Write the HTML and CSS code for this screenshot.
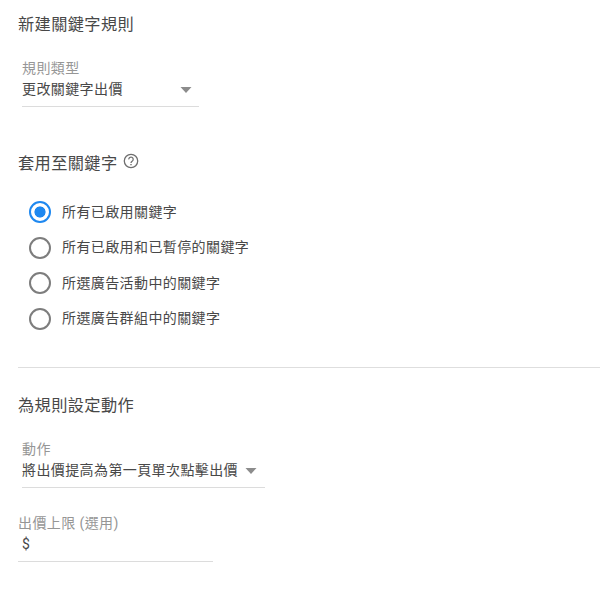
FILE: index.html
```html
<!DOCTYPE html>
<html lang="zh-TW">
<head>
    <meta charset="UTF-8">
    <meta name="viewport" content="width=device-width, initial-scale=1.0">
    <title>新建關鍵字規則</title>
    <link rel="stylesheet" href="styles.css">
</head>
<body>
    <div class="section type-section">
        <h2 class="title">新建關鍵字規則</h2>
        <div class="field select-type">
            <div class="label">規則類型</div>
            <div class="value">
                <span>更改關鍵字出價</span>
                <svg class="arrow" width="12" height="6" viewBox="0 0 12 6"><path d="M0.5 0h11L6 6z" fill="#8c8c8c"/></svg>
            </div>
        </div>
    </div>

    <div class="section apply-section">
        <h2 class="title">
            套用至關鍵字
            <svg class="help" width="16" height="16" viewBox="0 0 16 16" fill="none" stroke="#6e6e6e">
                <circle cx="8" cy="8" r="6.7" stroke-width="1.3"/>
                <path d="M5.8 6.4a2.2 2.2 0 1 1 3.7 1.5C8.7 8.6 8 8.9 8 10" stroke-width="1.25"/>
                <path d="M8 10.9v1.4" stroke-width="1.4"/>
            </svg>
        </h2>
        <div class="radio-group">
            <label class="option"><input type="radio" name="scope" checked><span>所有已啟用關鍵字</span></label>
            <label class="option"><input type="radio" name="scope"><span>所有已啟用和已暫停的關鍵字</span></label>
            <label class="option"><input type="radio" name="scope"><span>所選廣告活動中的關鍵字</span></label>
            <label class="option"><input type="radio" name="scope"><span>所選廣告群組中的關鍵字</span></label>
        </div>
    </div>

    <div class="section action-section">
        <h2 class="title">為規則設定動作</h2>
        <div class="field select-action">
            <div class="label">動作</div>
            <div class="value">
                <span>將出價提高為第一頁單次點擊出價</span>
                <svg class="arrow" width="12" height="6" viewBox="0 0 12 6"><path d="M0.5 0h11L6 6z" fill="#8c8c8c"/></svg>
            </div>
        </div>
        <div class="field bid-limit">
            <div class="label">出價上限 (選用)</div>
            <div class="value">$</div>
        </div>
    </div>
</body>
</html>
```

FILE: styles.css
```css
body {
    margin: 0;
    background-color: #fff;
    color: #484848;
    font-family: Roboto, "Noto Sans CJK TC", sans-serif;
    font-size: 14px;
    letter-spacing: 0.4px;
    overflow: hidden;
}
.section {
    margin-left: 18px;
}
.title {
    display: flex;
    align-items: center;
    height: 24px;
    margin: 0;
    font-size: 16.2px;
    font-weight: 400;
    line-height: 24px;
}
.type-section {
    padding-top: 13px;
    height: 139px;
}
.field {
    box-sizing: border-box;
    border-bottom: 1px solid #dcdcdc;
}
.label {
    height: 21px;
    line-height: 21px;
    color: #969696;
}
.value {
    display: flex;
    align-items: center;
    justify-content: space-between;
    height: 21px;
    line-height: 21px;
}
.select-type {
    width: 177px;
    height: 49px;
    margin: 21px 0 0 4px;
}
.select-type .value {
    padding-right: 7px;
}
.select-action .value {
    padding-right: 8px;
}
.help {
    margin: -6px 0 0 5px;
}
.apply-section {
    height: 215px;
    border-bottom: 1px solid #dedede;
}
.radio-group {
    padding: 18px 0 0 11px;
}
.option {
    display: flex;
    align-items: center;
    height: 35.5px;
}
.option span {
    padding-bottom: 2px;
}
.option input {
    appearance: none;
    box-sizing: border-box;
    width: 22px;
    height: 22px;
    margin: 1px 11px 0 0;
    border: 2px solid #7d7d7d;
    border-radius: 50%;
}
.option input:checked {
    border-color: #1e88f0;
    background: radial-gradient(circle, #1e88f0 5.2px, transparent 5.9px);
}
.action-section {
    padding-top: 26px;
}
.select-action {
    width: 243px;
    height: 49px;
    margin: 21px 0 0 4px;
}
.bid-limit {
    width: 195px;
    height: 49px;
    margin-top: 25px;
}
.bid-limit .value {
    padding-left: 4px;
}
```
